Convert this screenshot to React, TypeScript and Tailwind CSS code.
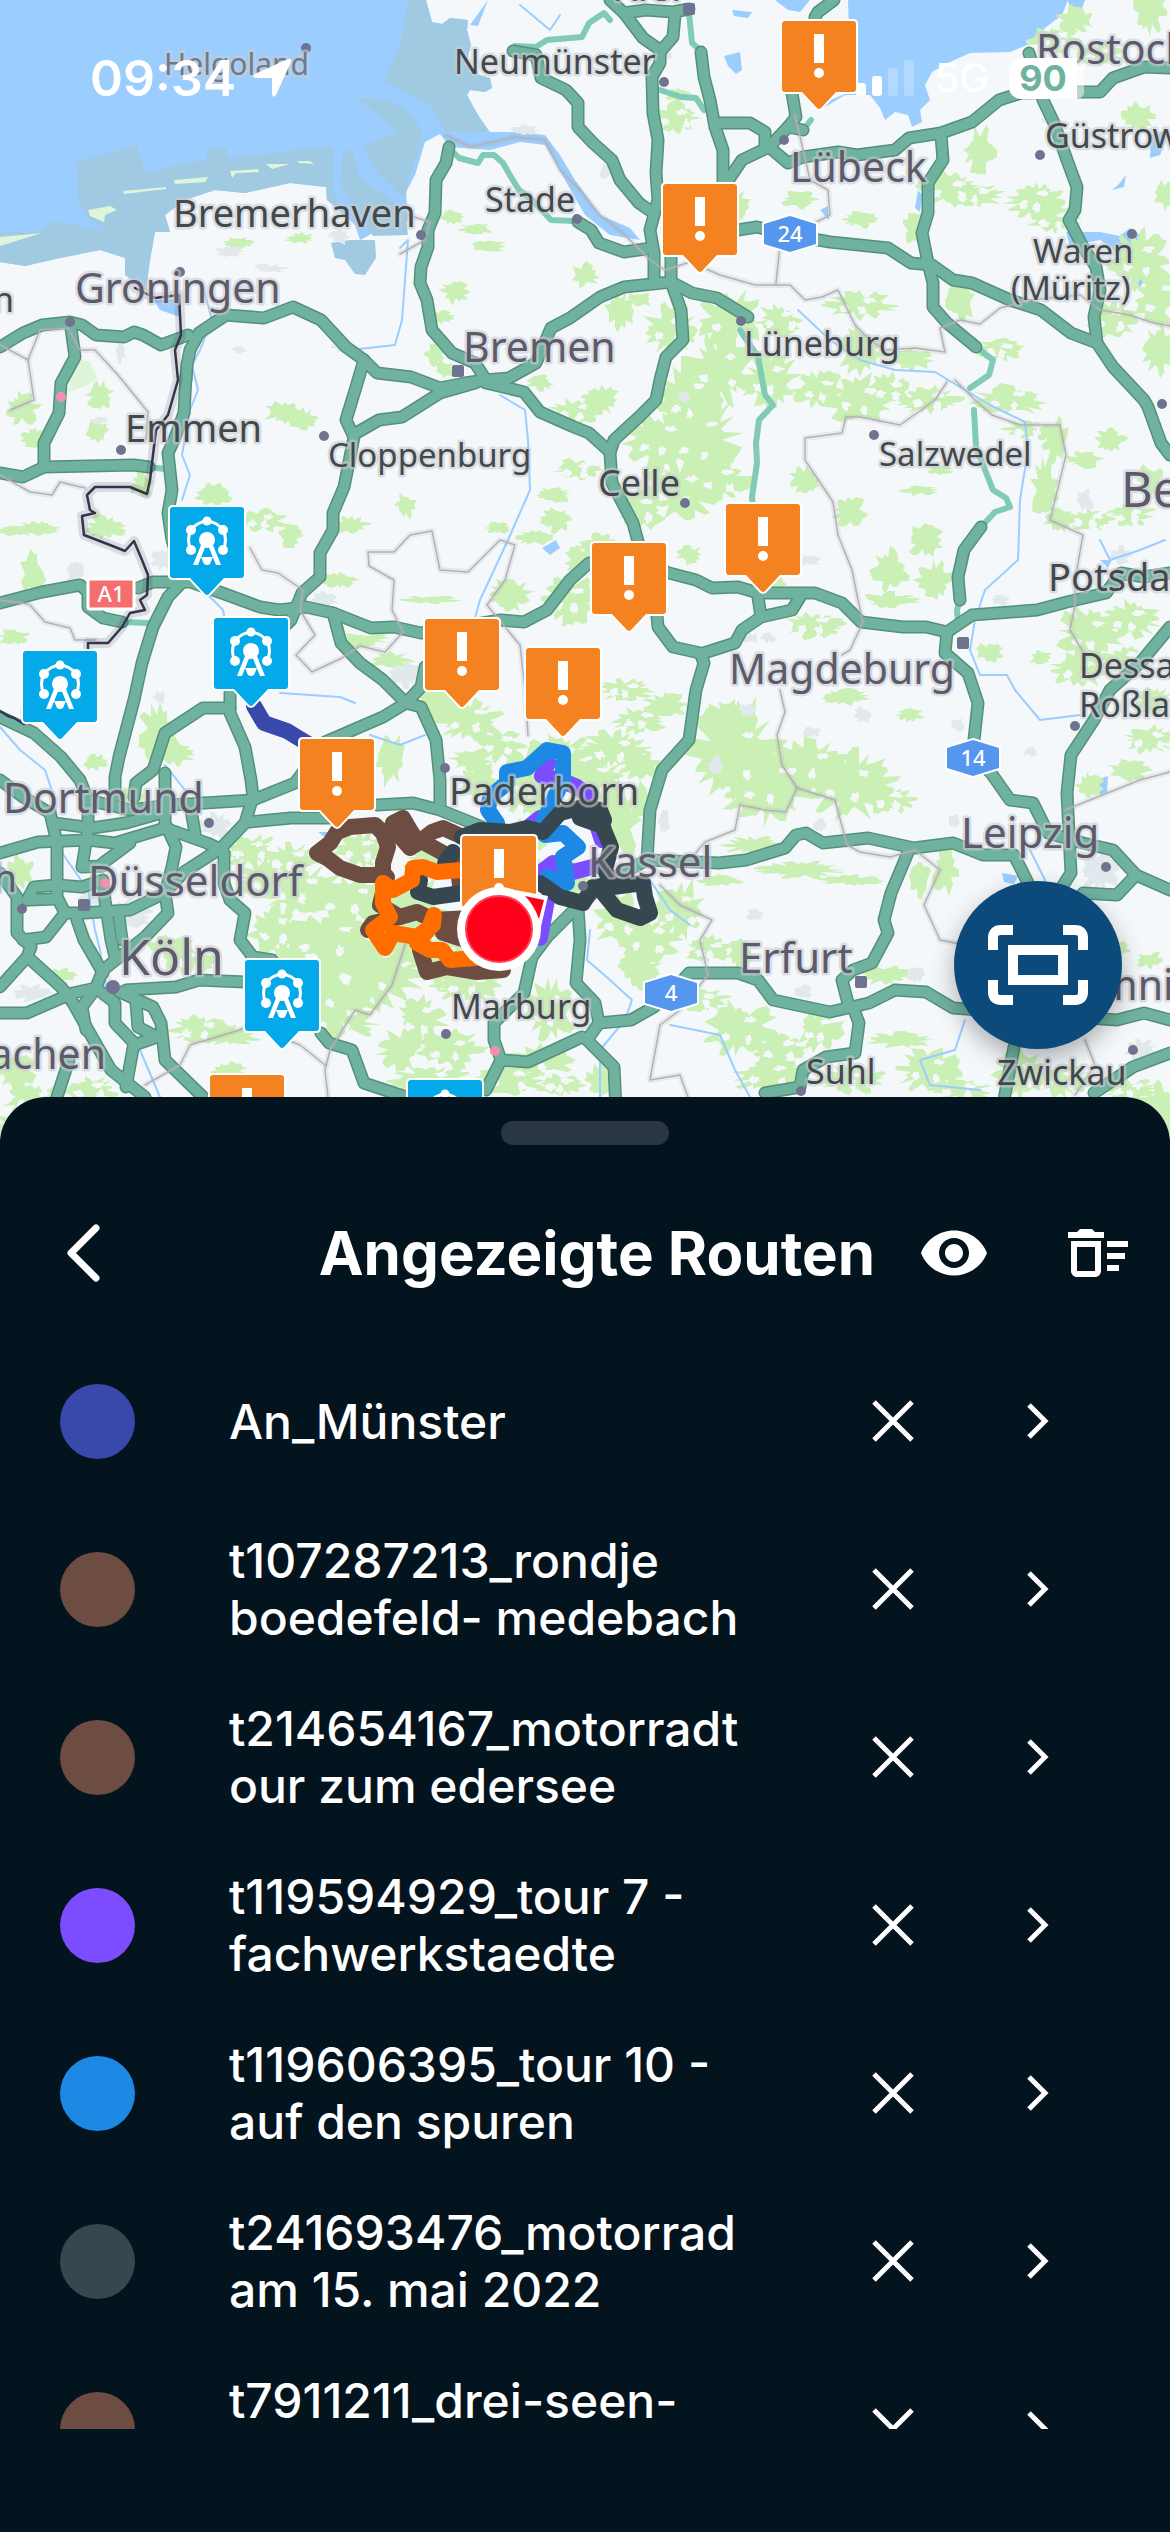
import { MdOutlineDeleteSweep, MdVisibility } from "react-icons/md";

const MAP_FONT = '"Noto Sans", "Open Sans", sans-serif';

const motorways = [
  "0,347 23,333 42,325 70,322 82,325 96,335 124,337 134,332 143,335 161,345 188,335",
  "186,380 187,365 190,350 199,333 226,315 264,318 293,307 321,320 346,347 364,360 377,373 411,377 440,388 465,383 486,380",
  "449,147 446,163 436,180 435,213 428,230 428,247 421,267 420,283 427,300 432,330 452,353 475,363 486,380",
  "513,51 536,55 541,78 566,90 578,103 578,127 593,143 612,160 620,180 639,203 652,212",
  "578,222 591,230 599,243 624,252 652,248",
  "610,0 624,13 643,38 660,50 660,63 652,77 653,113 658,140 656,173 658,200 650,230 654,253 654,280",
  "624,13 646,10 673,12 689,9",
  "675,15 673,37 660,52",
  "701,52 704,77 710,100 715,127 723,150 723,190",
  "721,123 750,123 765,132 765,145",
  "727,182 742,160 769,147 788,127 796,117 792,93",
  "788,127 803,130",
  "815,17 818,12 834,0",
  "769,147 788,163 803,157 838,152 857,155 895,150 909,138 941,133 972,122 999,100 1021,93 1083,92 1100,92 1113,78 1144,67 1170,68",
  "1029,53 1043,100 1054,123 1067,160 1077,187 1075,210 1069,220 1083,247 1096,267 1100,290 1094,317 1097,343",
  "941,135 943,160 928,183 928,213 922,233 928,263 933,283 933,307 947,323 976,347",
  "738,230 757,227 790,235 830,242 888,248 911,263 932,265 953,280 972,283 1010,300 1041,310 1071,333 1097,343 1113,367 1144,400 1148,407 1161,443 1170,455",
  "671,250 671,282 681,310 683,340 666,357 660,380 656,400 639,417 614,440 610,453 612,483 633,523 639,545",
  "486,380 509,378 536,363 551,328 570,318 600,297 624,287 671,282",
  "671,282 692,293 717,298 748,317",
  "486,383 524,392 540,412 574,427 589,433 610,452",
  "0,603 42,592 80,585 88,592 88,607 103,618 122,622",
  "138,588 153,582 191,582 222,593 260,607 279,610 306,607 333,613 371,628 394,627 421,633 501,620 524,622 547,610 570,580 589,563 640,562 669,573 696,580 712,588 738,587 758,593 815,593 842,603 861,622 903,627 926,627 947,632 972,615 1037,610 1067,602 1106,593 1121,573 1144,577 1170,573",
  "186,375 184,413 174,440 168,453 172,490 168,513 172,540 184,580 168,597 153,627 142,663 134,700 119,757 115,777 115,797",
  "71,328 75,357 61,383 59,413 44,443 44,467",
  "0,473 23,477 44,467 134,465 149,467",
  "475,383 440,393 402,417 379,420 358,432",
  "364,360 356,387 346,420 354,437 344,487 333,513 333,530 320,553 320,577 302,593 291,620 240,670 230,693 230,713 245,747 251,780 253,797 245,823 222,847",
  "333,613 341,643 360,663 383,680 406,703 421,687 425,667",
  "406,703 383,717 325,742 295,783 253,800 172,805 130,810 88,800",
  "406,703 421,707 436,740 440,780 440,807",
  "230,708 203,708 165,733 153,770 136,783 134,797",
  "0,717 34,733 61,757 80,780 88,800 88,830 82,867 103,866",
  "377,805 413,803 440,810 482,827",
  "333,818 291,818 249,822",
  "0,853 38,842 88,840 115,843 165,828 207,843 222,850",
  "54,823 92,828 126,823 165,812",
  "0,780 23,797 50,813 57,843 57,897 65,913 46,937 23,940",
  "103,863 130,843",
  "165,773 165,823 176,847 172,867 165,893 168,913 145,937 103,970 96,987",
  "191,810 195,833",
  "218,850 184,872 165,893 130,910 84,913 65,913",
  "224,853 224,883 230,900 245,913 240,940 253,957 272,960",
  "0,873 17,897 17,933 31,947 27,957 0,987",
  "27,900 34,887 57,885 82,887 103,880 105,900 111,940 115,957",
  "27,900 57,899",
  "77,920 84,940 103,973",
  "119,917 122,940",
  "31,960 61,987 73,1003 92,1037 111,1070 145,1097",
  "0,1013 27,1013 73,993 96,988 115,1003 115,1023 134,1043 126,1087",
  "96,988 82,1007 86,1030",
  "120,992 153,1007 161,1023 165,1060 203,1097",
  "136,1003 138,1027 157,1037 134,1045",
  "126,990 176,987 199,980 245,982",
  "69,1060 57,1097 55,1140",
  "321,1033 329,1043 352,1050 364,1083 406,1097",
  "574,910 547,937 532,957 524,993 494,1023 494,1040 501,1060 486,1090",
  "501,1060 528,1062 582,1037",
  "578,908 580,940 576,983 595,1003 599,1023 587,1040 614,1067 616,1110",
  "582,905 600,885 647,860",
  "599,1023 631,1020 654,1007 671,993 689,973 738,973 758,980 773,1000 830,1012 869,1003 895,990 926,992 953,1008 1117,1020 1144,1013 1170,1020",
  "849,1007 842,980 853,970 872,963 888,933 884,920 891,893 909,850",
  "853,1007 859,1023 855,1053 826,1057 803,1070 800,1087 765,1093",
  "647,860 719,863 746,860 785,848 796,835 806,833 823,843 868,838 914,848 953,843 983,855 1014,855 1029,885",
  "647,860 650,810 662,770 689,740 696,690 704,663 700,653 673,647 658,627 656,605",
  "704,653 735,643 742,630 761,617 758,597",
  "761,617 792,610 800,597",
  "973,757 991,773 1010,800 1033,803 1048,833 1083,843 1113,850 1136,875 1170,890",
  "1136,875 1117,895 1083,893",
  "1170,627 1140,663 1110,690 1094,720 1071,755 1067,793 1071,873 1060,890",
  "947,632 945,653 968,673 978,703 974,740 973,757",
  "981,527 964,550 958,577 960,600",
  "1014,1047 1002,1110",
  "1094,1093 1133,1067 1170,1053",
];

const trunkRoads = [
  "453,152 459,158 478,163 483,155 494,155 503,163 511,177 519,190 532,200 551,220 574,221",
  "515,46 536,47 547,40 582,37 589,23 604,13 610,20",
  "689,13 692,43 700,50",
  "660,90 681,97 696,98 704,110",
  "803,130 811,120",
  "976,347 993,360 989,375 970,388",
  "740,330 758,357 765,395 773,405 759,420 756,443 757,463 752,497 753,507",
  "974,410 976,447 993,490 1006,498 1010,507 995,512 981,527",
  "960,600 957,610 958,622",
  "122,622 149,623",
  "149,467 165,469",
];

const borders = [
  "400,254 425,240 430,222 408,215",
  "0,345 28,360 34,400 10,410",
  "28,360 40,330 68,328 80,350 95,350 118,375 148,412 146,440",
  "0,475 30,492 52,495 60,482 85,488",
  "250,548 262,570 278,573 303,590 300,610 315,635 296,655 312,672 342,658 360,646 385,652 403,632 392,610 394,580 369,566 368,552 394,552 410,535 432,531 440,570 468,572 500,540 515,545 505,580 487,605 520,645 525,690 528,735",
  "30,605 45,622 70,628 75,640 95,640",
  "0,600 28,604",
  "446,135 470,147 515,137 545,140 560,170 580,190 600,215 625,235 650,260 665,270 690,262 720,275 755,285 790,285 805,300 822,297 838,290 855,325 870,340 885,350 915,348 945,352 940,328 960,320 980,324 1000,308 1030,300 1080,295 1100,310 1130,315 1150,322 1170,326",
  "795,115 810,180 828,190 830,215 805,228 780,245 776,283",
  "947,382 935,400 900,425 860,417 846,417 842,433 805,438 805,460 833,502 838,535 852,570 858,600 863,622 850,650 842,655",
  "955,380 975,400 992,415 1020,425 1060,425 1066,455 1055,500 1050,520 1083,535 1075,580 1075,605 1070,630 1085,655",
  "780,690 785,712 777,735 782,765 797,788 835,800 847,845 860,852 890,857 915,850 940,870 924,905 940,940 965,945",
  "797,788 786,812 765,810 740,805 735,830 705,842 690,860",
  "405,945 392,985 370,1015 355,1010 330,1050 325,1070 328,1097",
  "145,1085 180,1065 190,1045 240,1030 250,1025 300,1045 325,1065",
  "660,885 680,905 712,920 700,940 708,975 680,1010 660,1025 650,1080 680,1075 688,1097",
  "1065,810 1110,792 1140,780 1170,772",
  "1085,1040 1095,1065 1075,1095",
];

const rivers = [
  "400,248 408,240 405,280 402,320 395,345 350,350",
  "204,290 212,320 200,350 192,365 198,390 190,410 182,455 190,475 182,500",
  "500,395 525,410 528,440 530,490 508,540 480,600 475,618",
  "208,595 223,610 225,620",
  "280,693 310,695 340,697 355,703",
  "370,735 400,745 425,735",
  "0,727 20,750 45,770 55,800 60,850 88,890 95,930 100,950 110,1010 140,1050 160,1097",
  "165,765 185,790 210,800",
  "798,310 830,340 860,360 895,370 935,372 990,405 1025,422 1028,450 1020,500 1018,560 985,590 975,620 970,650 980,675 1007,675 1015,690 1040,720 1080,715",
  "1100,540 1110,560 1140,550 1165,540",
  "590,930 587,960 610,980 632,1000 625,1020 600,1050 600,1097",
  "650,880 670,910 690,925",
  "670,1025 720,1035 735,1070 750,1097",
  "965,1020 955,1050 920,1060 930,1085 980,1090",
  "1030,850 1045,880 1040,910",
  "560,15 550,30 520,5",
];

const frontier =
  "135,288 155,298 179,295 181,335 175,350 178,380 168,415 156,430 150,480 147,494 130,487 95,487 87,495 90,510 95,513 82,516 84,535 110,545 125,551 134,541 142,560 148,575 147,595 140,600 145,610 130,613 122,627 108,643 88,643 88,655";

// [cx, cy, rx, ry]
const woods: number[][] = [
  [237, 243, 12, 5], [300, 238, 12, 4], [476, 229, 12, 5], [452, 217, 8, 5], [490, 247, 14, 5], [585, 275, 12, 9],
  [455, 292, 12, 8], [443, 317, 8, 5], [435, 355, 8, 8], [445, 370, 8, 6], [540, 383, 10, 6], [100, 395, 10, 10],
  [22, 408, 14, 12], [35, 438, 10, 8], [96, 430, 8, 8], [142, 485, 8, 10], [105, 528, 18, 9], [40, 528, 16, 5],
  [32, 572, 9, 18], [13, 637, 12, 6], [20, 530, 22, 4], [213, 495, 14, 9], [262, 521, 20, 8], [290, 536, 10, 8],
  [285, 413, 18, 8], [305, 420, 12, 8], [350, 525, 16, 6], [405, 505, 8, 10], [553, 495, 16, 6], [557, 520, 12, 9],
  [575, 412, 22, 10], [578, 470, 20, 8], [535, 538, 14, 5], [499, 528, 10, 5], [340, 580, 14, 6], [430, 600, 26, 3],
  [510, 595, 18, 12], [570, 600, 24, 18], [580, 560, 12, 10], [160, 735, 18, 22], [175, 755, 16, 8], [95, 762, 10, 6],
  [360, 640, 25, 5], [390, 660, 18, 6], [440, 700, 18, 15], [470, 720, 30, 16], [500, 745, 22, 12], [390, 760, 12, 20],
  [675, 118, 20, 12], [680, 95, 12, 5], [735, 205, 14, 10], [800, 200, 14, 7], [860, 220, 14, 6], [735, 215, 8, 6],
  [980, 150, 12, 18], [950, 190, 26, 12], [975, 195, 26, 8], [1035, 200, 24, 14], [1055, 220, 22, 10], [915, 228, 10, 12],
  [1055, 40, 22, 10], [1075, 20, 14, 10], [1100, 55, 22, 8], [1150, 10, 14, 18], [1165, 195, 10, 10], [1138, 115, 12, 10],
  [1140, 260, 26, 22], [1160, 300, 20, 24], [1110, 320, 20, 14], [1160, 350, 14, 18], [960, 300, 12, 18], [860, 305, 30, 10],
  [620, 310, 12, 14], [640, 300, 10, 6], [670, 330, 22, 18], [730, 320, 26, 22], [720, 370, 32, 26], [690, 400, 28, 28],
  [660, 440, 32, 22], [700, 440, 32, 32], [680, 490, 34, 22], [640, 510, 20, 16], [720, 480, 24, 16], [780, 320, 20, 12],
  [770, 380, 24, 22], [820, 390, 22, 14], [860, 400, 30, 18], [890, 390, 20, 12], [930, 400, 26, 10], [600, 400, 16, 10],
  [860, 350, 18, 20], [910, 360, 18, 8], [1000, 350, 20, 8], [1010, 400, 30, 12], [1030, 430, 22, 8], [1055, 440, 10, 16],
  [850, 510, 14, 12], [805, 480, 12, 10], [920, 490, 16, 4], [940, 470, 10, 4], [925, 540, 14, 12], [890, 570, 14, 16],
  [890, 600, 22, 6], [935, 580, 16, 14], [1045, 490, 10, 26], [1060, 520, 12, 10], [1090, 520, 24, 8], [1130, 515, 20, 8],
  [1110, 440, 12, 8], [1085, 460, 14, 6], [1150, 480, 10, 12], [600, 545, 16, 8], [690, 555, 10, 7], [775, 582, 10, 6],
  [815, 625, 26, 10], [846, 697, 18, 6], [990, 653, 12, 8], [1040, 658, 8, 6], [910, 715, 10, 5], [1090, 635, 26, 22],
  [1130, 620, 26, 14], [1080, 670, 24, 12], [1125, 660, 20, 10], [1155, 700, 14, 10], [1150, 740, 22, 10], [1130, 770, 18, 8],
  [625, 690, 22, 8], [640, 720, 22, 10], [665, 705, 18, 10], [615, 750, 30, 14], [595, 780, 26, 20], [640, 765, 18, 10],
  [735, 755, 40, 40], [770, 785, 42, 28], [810, 765, 38, 18], [850, 785, 40, 24], [890, 800, 20, 10], [730, 715, 18, 12],
  [755, 845, 30, 6], [800, 870, 36, 6], [850, 880, 26, 4], [720, 880, 20, 4], [620, 820, 16, 30], [640, 800, 10, 14],
  [620, 920, 22, 20], [650, 940, 28, 18], [680, 910, 20, 22], [710, 950, 20, 10], [740, 955, 8, 14], [640, 970, 18, 14],
  [700, 1000, 26, 8], [740, 1030, 30, 20], [780, 1050, 24, 14], [770, 1075, 30, 14], [820, 1030, 20, 16], [850, 1080, 30, 10],
  [900, 1040, 26, 6], [930, 1070, 28, 16], [960, 1090, 26, 8], [1020, 1075, 22, 18], [1060, 1080, 26, 12], [1130, 1090, 24, 8],
  [945, 870, 10, 18], [885, 975, 22, 7], [920, 880, 8, 12], [1110, 950, 16, 8], [1150, 960, 12, 6],
  [250, 850, 24, 12], [290, 860, 26, 12], [300, 890, 38, 18], [350, 900, 40, 18], [270, 880, 28, 16], [275, 930, 22, 18],
  [330, 940, 50, 22], [370, 970, 48, 32], [330, 990, 44, 26], [390, 930, 40, 22], [300, 965, 34, 18], [340, 1020, 34, 14],
  [360, 850, 22, 14], [430, 860, 20, 10], [410, 905, 36, 20], [440, 960, 30, 20], [470, 985, 34, 12], [420, 1020, 22, 20],
  [450, 1050, 30, 14], [400, 1050, 18, 16], [430, 1080, 34, 10], [510, 1080, 30, 12], [550, 1010, 20, 22], [540, 1060, 26, 14],
  [200, 1030, 26, 10], [230, 1035, 26, 7], [190, 960, 20, 10], [170, 945, 18, 8], [230, 1070, 14, 6], [60, 975, 12, 5],
  [20, 870, 10, 12], [15, 1070, 16, 16], [35, 1100, 26, 12], [20, 1125, 20, 12], [90, 1090, 22, 10], [130, 800, 10, 14],
  [530, 780, 24, 26], [560, 760, 28, 20], [590, 800, 16, 12], [520, 850, 22, 20], [560, 880, 22, 14], [480, 780, 16, 12],
  [470, 760, 18, 8], [560, 1085, 20, 8], [600, 1080, 12, 12], [1090, 785, 10, 10], [1160, 1110, 16, 20],
];

// Small settlements, drawn as pale grey specks
const towns: number[][] = [
  [230, 252, 14, 5], [270, 268, 16, 4], [340, 237, 10, 7], [120, 352, 5, 10], [75, 572, 8, 12], [165, 560, 12, 10],
  [325, 600, 12, 8], [405, 675, 16, 12], [340, 345, 8, 7], [240, 350, 6, 4], [100, 420, 8, 4], [160, 697, 6, 6],
  [684, 397, 5, 5], [750, 638, 8, 5], [768, 637, 7, 6], [862, 715, 8, 8], [812, 732, 8, 5], [958, 725, 6, 6], [1030, 752, 7, 4],
  [1000, 600, 8, 5], [1085, 500, 8, 10], [1121, 555, 10, 8], [810, 560, 12, 5], [716, 765, 8, 8], [748, 710, 8, 6],
  [216, 826, 16, 12], [130, 915, 20, 14], [95, 895, 16, 14], [105, 990, 14, 12], [32, 993, 16, 8], [755, 915, 8, 6],
  [803, 992, 8, 8], [915, 975, 8, 8], [1100, 870, 20, 20], [1140, 1050, 16, 10], [820, 825, 6, 6], [955, 820, 6, 6],
  [664, 820, 6, 12], [525, 130, 12, 5], [665, 55, 6, 5], [700, 265, 8, 6], [1048, 118, 6, 6], [605, 172, 5, 8],
];

type Label = { text: string; x: number; y: number; size: number; tone?: string; end?: boolean };

const labels: Label[] = [
  { text: "Helgoland", x: 164, y: 75, size: 30, tone: "#6e7b8b" },
  { text: "Neumünster", x: 454, y: 74, size: 34 },
  { text: "Kiel", x: 612, y: 1, size: 41, tone: "#5c5a6b" },
  { text: "Stade", x: 485, y: 212, size: 34 },
  { text: "Bremerhaven", x: 173, y: 227, size: 38 },
  { text: "Groningen", x: 75, y: 303, size: 41, tone: "#5c5a6b" },
  { text: "Leeuwarden", x: 14, y: 312, size: 34, end: true },
  { text: "Bremen", x: 463, y: 362, size: 41, tone: "#5c5a6b" },
  { text: "Emmen", x: 125, y: 442, size: 38 },
  { text: "Cloppenburg", x: 328, y: 467, size: 33 },
  { text: "Lübeck", x: 790, y: 182, size: 41, tone: "#5c5a6b" },
  { text: "Rostock", x: 1036, y: 64, size: 41, tone: "#5c5a6b" },
  { text: "Güstrow", x: 1045, y: 148, size: 34 },
  { text: "Waren", x: 1033, y: 263, size: 33 },
  { text: "(Müritz)", x: 1011, y: 300, size: 33 },
  { text: "Lüneburg", x: 744, y: 356, size: 34 },
  { text: "Celle", x: 598, y: 496, size: 36 },
  { text: "Salzwedel", x: 879, y: 466, size: 33 },
  { text: "Berlin", x: 1121, y: 507, size: 49, tone: "#5c5a6b" },
  { text: "Potsdam", x: 1048, y: 591, size: 38 },
  { text: "Magdeburg", x: 729, y: 684, size: 41, tone: "#5c5a6b" },
  { text: "Dessau-", x: 1079, y: 678, size: 34 },
  { text: "Roßlau", x: 1079, y: 717, size: 34 },
  { text: "Dortmund", x: 3, y: 813, size: 41, tone: "#5c5a6b" },
  { text: "Düsseldorf", x: 88, y: 896, size: 42, tone: "#5c5a6b" },
  { text: "Mönchengladbach", x: 17, y: 892, size: 38, tone: "#5c5a6b", end: true },
  { text: "Köln", x: 119, y: 975, size: 50, tone: "#5c5a6b" },
  { text: "Aachen", x: 106, y: 1069, size: 41, tone: "#5c5a6b", end: true },
  { text: "Paderborn", x: 449, y: 805, size: 38 },
  { text: "Kassel", x: 588, y: 877, size: 42, tone: "#5c5a6b" },
  { text: "Marburg", x: 451, y: 1019, size: 34 },
  { text: "Erfurt", x: 739, y: 973, size: 42, tone: "#5c5a6b" },
  { text: "Suhl", x: 806, y: 1084, size: 34 },
  { text: "Leipzig", x: 961, y: 848, size: 42, tone: "#5c5a6b" },
  { text: "Chemnitz", x: 1025, y: 1000, size: 41, tone: "#5c5a6b" },
  { text: "Zwickau", x: 997, y: 1085, size: 34 },
];

const townDots = [
  [306, 48], [421, 235], [577, 219], [70, 322], [664, 82], [784, 140], [1040, 155], [1132, 234], [741, 321],
  [121, 450], [324, 436], [685, 503], [874, 435], [1162, 404], [1075, 726], [445, 768], [209, 823], [22, 909],
  [583, 886], [446, 1034], [1106, 867], [1133, 1050], [801, 1091], [1033, 73], [180, 272],
];
const capitalDots = [[458, 371], [689, 9], [963, 643], [84, 905], [861, 982]];

const routes = [
  { color: "#3949ab", d: "M254 706 264 723 287 731 310 745" },
  {
    color: "#6d4c41",
    d: "M317 853 330 843 337 832 350 827 375 825 383 833 388 847 383 863 383 875 360 875 340 868 327 858ZM388 840 393 823 403 818 410 830 418 843 410 848 397 833M418 843 432 832 443 828 463 837M423 842 443 853 457 863 460 885M387 877 380 905 400 917 373 923 368 930M400 917 417 912 433 920 470 918M443 933 465 940 455 930 470 928M420 950 427 972 447 967 477 972 503 970",
  },
  { color: "#7c4dff", d: "M548 763 542 776 560 780 577 787 590 797M540 873 553 863 573 872 600 865M530 826 540 818M596 822 602 840M547 900 540 938" },
  {
    color: "#1e88e5",
    d: "M497 823 488 810 490 797 507 783 507 772 527 768 547 750 563 753 563 780 550 807 540 830M545 835 563 833 578 847 563 857 567 883 547 877",
  },
  {
    color: "#37474f",
    d: "M453 852 445 863M420 880 418 892 433 897 462 893M462 837 480 830 510 832 527 828 543 832 560 813 583 807 600 810 604 820 597 824 580 818M600 815 604 830 611 847 605 870 613 887 643 883 645 897 650 913 640 918 617 910 603 893M540 883 560 897 583 903 593 887 613 885",
  },
  {
    color: "#ff6d00",
    d: "M462 870 437 872 423 867 413 868 412 880 393 890 383 883 383 903 390 917 373 930 385 948 393 933 417 937 433 925 434 915 428 930 417 943 430 950 442 950 450 960 475 958",
  },
];

const alerts = [[819, 21], [700, 184], [763, 504], [629, 543], [462, 619], [563, 648], [337, 739], [499, 836], [247, 1075]];
const attractions = [[207, 507], [251, 618], [60, 651], [282, 960], [445, 1080]];

const routeList = [
  { name: "An_Münster", dot: "bg-[#3949ab]" },
  { name: "t107287213_rondje\nboedefeld- medebach", dot: "bg-[#6d4c41]" },
  { name: "t214654167_motorradt\nour zum edersee", dot: "bg-[#6d4c41]" },
  { name: "t119594929_tour 7 -\nfachwerkstaedte", dot: "bg-[#7c4dff]" },
  { name: "t119606395_tour 10 -\nauf den spuren", dot: "bg-[#1e88e5]" },
  { name: "t241693476_motorrad\nam 15. mai 2022", dot: "bg-[#37474f]" },
  { name: "t7911211_drei-seen-\ntour", dot: "bg-[#6d4c41]" },
];

// Ragged outline around a centre; the same seed always gives the same shape
function blob([cx, cy, rx, ry]: number[], seed: number) {
  let s = seed * 7919 + 17;
  const rand = () => {
    s = (s * 16807) % 2147483647;
    return s / 2147483647;
  };
  rand();
  const count = 12 + Math.round(rx);
  const pts: string[] = [];
  for (let i = 0; i < count; i++) {
    const a = (i / count) * Math.PI * 2;
    const r = 0.6 + rand() * 0.7;
    pts.push(`${Math.round(cx + Math.cos(a) * rx * r)},${Math.round(cy + Math.sin(a) * ry * r)}`);
  }
  return pts.join(" ");
}

// Clearings that break up the bigger woods
function clearings(area: number[], i: number) {
  const [cx, cy, rx, ry] = area;
  if (rx < 20 || ry < 8) return [];
  return [
    [cx - rx / 2, cy + ry / 3, 5, 4],
    [cx + rx / 3, cy - ry / 2, 6, 3],
    [cx + (i % 7) * 2, cy + ry / 2, 4, 5],
  ];
}

function Pin({ x, y, color, children }: { x: number; y: number; color: string; children: React.ReactNode }) {
  return (
    <g transform={`translate(${x} ${y})`}>
      <path
        d="M-34 0H34Q37 0 37 3V68Q37 71 34 71H17L3 86Q0 90-3 86L-17 71H-34Q-37 71-37 68V3Q-37 0-34 0Z"
        fill={color}
        stroke="#fff"
        strokeWidth="4"
        paintOrder="stroke"
      />
      {children}
    </g>
  );
}

function Shield({ x, y, text }: { x: number; y: number; text: string }) {
  return (
    <g transform={`translate(${x} ${y})`}>
      <path d="M0-18 26-10V10L0 18-26 10V-10Z" fill="#5596ee" stroke="#fff" strokeWidth="4" paintOrder="stroke" />
      <text y="8" fontSize="22" fontWeight="500" fill="#fff" textAnchor="middle">
        {text}
      </text>
    </g>
  );
}

function RouteMap() {
  return (
    <svg viewBox="0 0 1170 1140" className="block h-full w-full" fontFamily={MAP_FONT} role="img" aria-label="Karte">
      <rect width="1170" height="1140" fill="#f4f8fb" />

      {/* North Sea, Baltic and tidal flats */}
      <path
        fill="#9bcdff"
        d="M0 0H500L426 0 432 22 442 24 450 18 468 20 467 30 471 45 467 60 470 72 490 78 492 88 485 92 470 90 467 95 478 115 490 132 515 132 545 135 560 155 575 180 600 215 630 228 640 240 610 235 585 215 565 180 545 145 520 142 490 150 450 147 440 134 425 142 415 175 406 192 408 220 400 232 375 232 360 240 355 225 327 200 326 187 290 183 245 193 215 190 185 200 165 215 170 232 155 232 150 260 146 290 155 300 180 300 180 317 160 310 148 292 125 275 125 258 100 250 60 258 25 266 0 262Z"
      />
      <path
        fill="#a0cae2"
        d="M408 0H426L432 22 442 24 450 18 468 20 467 30 471 45 467 60 470 72 490 78 492 88 485 92 470 90 467 95 478 115 488 132H445L430 105 405 92 384 80 400 45ZM356 98 380 98 405 108 422 130 420 146 397 131ZM363 147 397 131 415 134 420 148 410 175 405 200 375 170ZM343 152 352 149 360 177 405 210 408 235 373 236 340 184ZM77 162 137 145 145 172 160 170 185 162 206 161 208 149 227 148 227 158 333 146 333 190 340 210 327 200 326 187 290 183 245 193 215 190 185 200 165 215 170 232 155 232 150 260 146 290 125 275 125 258 100 250 60 258 25 266 0 262V232H38L55 221 75 225 105 230 88 217 78 200ZM331 243 350 240 375 240 376 258 365 275 355 274 345 260 335 258Z"
      />
      <path
        fill="#dff5d9"
        d="M88 210 110 206 117 210 105 215 104 222 90 216ZM0 237 42 233 0 246ZM174 180 208 177 205 182 175 184ZM123 191 166 187 166 189 124 194ZM230 171 258 169 259 172 236 173 232 178ZM266 164 290 164 272 169ZM297 161 310 161 314 164 299 163ZM75 357 90 362 98 380 80 388 68 392Z"
      />
      <path
        fill="#9bcdff"
        d="M775 0H810L800 12 788 10ZM848 0H1068L1062 15 1045 28 1035 42 1010 52 970 53 950 62 932 72 925 85 930 100 920 110 922 122 912 127 908 115 895 112 885 120 880 108 870 95 845 95 820 110 830 100 850 92 850 60ZM732 10 752 12 748 18 734 16ZM724 56 740 52 742 70 736 74 728 66ZM1068 0H1085L1078 20 1070 12ZM1066 232 1100 232 1120 236 1130 228 1140 235 1150 250 1149 275 1139 288 1132 262 1100 240 1070 246ZM1118 185 1126 175 1124 187 1112 190ZM918 190 922 195 920 212 915 208ZM488 0 478 26 470 25ZM1151 135 1170 130 1160 155 1150 158ZM1100 560 1112 560 1108 568ZM1002 873 1018 876 1014 884 1004 882ZM542 548 556 540 560 548 550 555ZM1096 780 1108 776 1107 792 1100 795ZM820 210 828 206 829 220ZM318 832 328 832 326 838Z"
      />

      {woods.map(([cx, cy, rx, ry], i) => (
        <polygon key={i} points={blob([cx, cy, rx + 2, ry * 1.25], i + 1)} fill="#cbf0b5" />
      ))}
      {woods.flatMap(clearings).map((c, i) => (
        <polygon key={i} points={blob(c, i + 601)} fill="#f4f8fb" />
      ))}
      {towns.map((t, i) => (
        <polygon key={i} points={blob(t, i + 301)} fill="#e2e9ed" />
      ))}

      <g fill="none" strokeLinejoin="round" strokeLinecap="round">
        {rivers.map((r) => (
          <polyline key={r} points={r} stroke="#9bcdff" strokeWidth="2" />
        ))}
        {trunkRoads.map((r) => (
          <polyline key={r} points={r} stroke="#80cab6" strokeWidth="6" />
        ))}
        {motorways.map((r) => (
          <polyline key={r} points={r} stroke="#549077" strokeWidth="13" />
        ))}
        {motorways.map((r) => (
          <polyline key={r} points={r} stroke="#70b2a0" strokeWidth="10" />
        ))}
        {borders.map((b) => (
          <g key={b}>
            <polyline points={b} stroke="#a9a9ad" strokeOpacity="0.18" strokeWidth="6" />
            <polyline points={b} stroke="#b3b1b3" strokeWidth="1.5" />
          </g>
        ))}
        <polyline points={frontier} stroke="#30304a" strokeOpacity="0.14" strokeWidth="10" />
        <polyline points={frontier} stroke="#35344c" strokeWidth="2.5" />
        <polyline points="0,711 8,716 14,718 24,724 22,712" stroke="#35344c" strokeWidth="2.5" />
        {routes.map((r) => (
          <path key={r.color} d={r.d} stroke={r.color} strokeWidth="16" />
        ))}
      </g>

      <g fill="#f48fb1">
        <circle cx="61" cy="397" r="5" />
        <circle cx="105" cy="883" r="5" />
        <circle cx="495" cy="1051" r="5" />
      </g>
      <g fill="#70738f">
        {townDots.map(([x, y]) => (
          <circle key={`${x}-${y}`} cx={x} cy={y} r="5" />
        ))}
        <circle cx="113" cy="987" r="7" />
        {capitalDots.map(([x, y]) => (
          <rect key={`${x}-${y}`} x={x - 6} y={y - 6} width="12" height="12" rx="2" />
        ))}
      </g>

      {labels.map((l) => (
        <text
          key={l.text}
          x={l.x}
          y={l.y}
          fontSize={l.size}
          fill={l.tone ?? "#43484b"}
          stroke="#c9ccd0"
          strokeOpacity="0.6"
          strokeWidth="5"
          strokeLinejoin="round"
          paintOrder="stroke"
          textAnchor={l.end ? "end" : "start"}
        >
          {l.text}
        </text>
      ))}

      <Shield x={790} y={234} text="24" />
      <Shield x={973} y={758} text="14" />
      <Shield x={671} y={993} text="4" />
      <rect x="88" y="579" width="46" height="30" rx="2" fill="#f46e6e" stroke="#fff" strokeWidth="3" />
      <text x="111" y="602" fontSize="22" fontWeight="500" fill="#fff" textAnchor="middle">
        A1
      </text>

      {attractions.map(([x, y]) => (
        <Pin key={`${x}-${y}`} x={x} y={y} color="#03a9e9">
          <path d="M-16 43Q-21 33-16 23Q-10 15 0 14Q10 15 16 23Q21 33 16 43" fill="none" stroke="#fff" strokeWidth="3" />
          <g fill="#fff">
            <circle cy="14" r="4.5" />
            <circle cx="-16" cy="23" r="5" />
            <circle cx="16" cy="23" r="5" />
            <circle cx="-16" cy="43" r="5" />
            <circle cx="16" cy="43" r="5" />
            <path d="M-6 50H6L3 57Q0 59-3 57Z" />
            <circle cy="33" r="8" />
            <path d="M-6 38H-1L-9 58H-14ZM6 38H1L9 58H14Z" />
          </g>
        </Pin>
      ))}
      {alerts.map(([x, y]) => (
        <Pin key={`${x}-${y}`} x={x} y={y} color="#f58220">
          <rect x="-5" y="13" width="10" height="29" fill="#fff" />
          <circle cy="52" r="5" fill="#fff" />
        </Pin>
      ))}

      {/* Own position with heading */}
      <path d="M499 887 548 896 538 940Z" fill="#fff" />
      <circle cx="499" cy="929" r="42" fill="#fff" />
      <path d="M525 896 544 900 539 919Q534 905 525 896Z" fill="#ff001a" />
      <circle cx="499" cy="929" r="33" fill="#ff001a" stroke="#ff4056" strokeWidth="2" />
    </svg>
  );
}

function StatusBar() {
  return (
    <div className="absolute inset-x-0 top-0 flex h-[156px] items-center justify-between pr-[86px] pl-[90px] text-white">
      <div className="flex items-center gap-4">
        <span className="text-[50px] leading-none font-semibold">09:34</span>
        <svg viewBox="0 0 40 40" className="size-10" fill="currentColor" aria-hidden="true">
          <path d="M36 1Q40 0 39 4L24 37Q21 41 20 36V20H4Q-1 19 3 16Z" />
        </svg>
      </div>
      <div className="flex items-center gap-5">
        <svg viewBox="0 0 58 38" className="h-[38px] w-[58px]" fill="currentColor" aria-hidden="true">
          <rect y="24" width="10" height="13" rx="3" />
          <rect x="16" y="17" width="10" height="20" rx="3" />
          <rect x="32" y="9" width="10" height="28" rx="3" opacity="0.25" />
          <rect x="48" y="1" width="10" height="36" rx="3" opacity="0.25" />
        </svg>
        <span className="text-[40px] leading-none font-medium">5G</span>
        <div className="flex h-[41px] items-center">
          <span className="flex h-full w-[68px] items-center justify-center rounded-l-xl bg-white text-4xl font-bold text-[#70b2a0]">
            90
          </span>
          <span className="h-full w-[7px] rounded-r-xl bg-white/50" />
        </div>
      </div>
    </div>
  );
}

function RouteRow({ name, dot }: { name: string; dot: string }) {
  return (
    <li className="flex h-[168px] shrink-0 items-center pr-[90px] pl-[60px]">
      <span className={`size-[75px] shrink-0 rounded-full ${dot}`} />
      <span className="ml-[94px] w-0 flex-1 text-[48px] leading-[57px] font-medium whitespace-pre">{name}</span>
      <button type="button" aria-label="Route ausblenden" className="flex size-[84px] items-center justify-center">
        <svg viewBox="0 0 42 42" className="size-[42px]" stroke="currentColor" strokeWidth="5" aria-hidden="true">
          <path d="M2 2 40 40M40 2 2 40" />
        </svg>
      </button>
      <button type="button" aria-label="Route öffnen" className="ml-[61px] flex size-[84px] items-center justify-center">
        <svg viewBox="0 0 22 36" className="h-9 w-[22px]" fill="none" stroke="currentColor" strokeWidth="5" aria-hidden="true">
          <path d="M2 2 18 18 2 34" />
        </svg>
      </button>
    </li>
  );
}

export default function App() {
  return (
    <main className="flex h-screen flex-col overflow-hidden bg-[#03141f] font-[Inter,'Liberation_Sans',sans-serif] text-white">
      <section className="relative aspect-[1170/1140] w-full shrink-0">
        <RouteMap />
        <StatusBar />
        <button
          type="button"
          aria-label="Alle Routen anzeigen"
          className="absolute right-12 bottom-[91px] flex size-[168px] items-center justify-center rounded-full bg-[#0c4a7c] shadow-[0_10px_24px_rgba(0,0,0,0.3)]"
        >
          <svg viewBox="0 0 100 80" className="h-20 w-[100px]" fill="none" stroke="#fff" strokeWidth="10" aria-hidden="true">
            <path d="M5 25V13Q5 5 13 5H25M75 5H87Q95 5 95 13V25M95 55V67Q95 75 87 75H75M25 75H13Q5 75 5 67V55" />
            <rect x="25" y="25" width="50" height="30" />
          </svg>
        </button>
      </section>

      <section className="relative -mt-[43px] flex min-h-0 flex-1 flex-col rounded-t-[46px] bg-[#03141f] pt-6 pb-[103px]">
        <div className="h-6 w-[168px] shrink-0 self-center rounded-full bg-[#2a3642]" />
        <header className="mt-6 grid h-[168px] shrink-0 grid-cols-[1fr_auto_1fr] items-center pr-9 pl-[60px]">
          <button type="button" aria-label="Zurück" className="flex h-[72px] w-12 items-center justify-center">
            <svg
              viewBox="0 0 34 58"
              className="h-[58px] w-[34px]"
              fill="none"
              stroke="currentColor"
              strokeWidth="7"
              strokeLinecap="round"
              strokeLinejoin="round"
              aria-hidden="true"
            >
              <path d="M29 4 4 29 29 54" />
            </svg>
          </button>
          <h1 className="text-[60px] leading-none font-bold">Angezeigte Routen</h1>
          <div className="flex items-center justify-end gap-[72px]">
            <button type="button" aria-label="Routen einblenden">
              <MdVisibility className="size-[72px]" />
            </button>
            <button type="button" aria-label="Alle Routen entfernen">
              <MdOutlineDeleteSweep className="size-[72px]" />
            </button>
          </div>
        </header>
        <ul className="flex min-h-0 flex-1 flex-col overflow-hidden">
          {routeList.map((route) => (
            <RouteRow key={route.name} {...route} />
          ))}
        </ul>
      </section>
    </main>
  );
}
